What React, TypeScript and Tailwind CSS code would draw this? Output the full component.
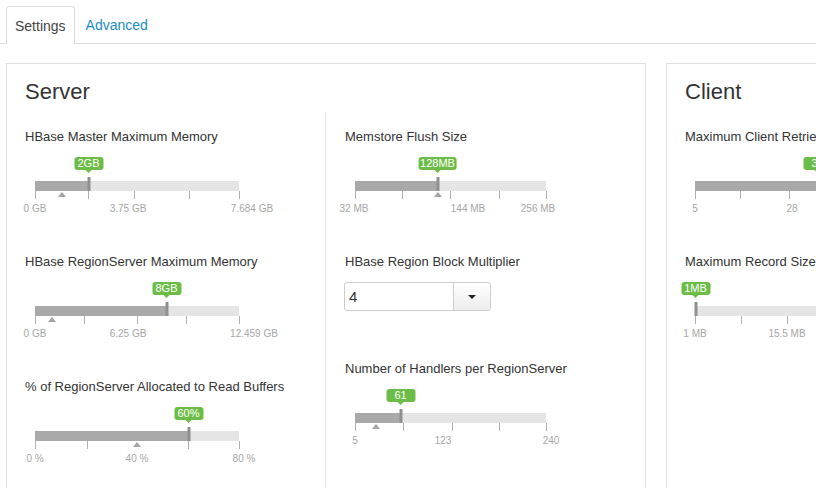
import React from 'react';

type SliderDef = {
  label: string;
  width: number;
  value: number;
  tip: string;
  ticks: number[];
  marker?: number;
  labels: [number, string][];
};

const leftCol: SliderDef[] = [
  {
    label: 'HBase Master Maximum Memory',
    width: 204,
    value: 53,
    tip: '2GB',
    ticks: [0, 53, 99, 154, 204],
    marker: 26,
    labels: [[0, '0 GB'], [93, '3.75 GB'], [217, '7.684 GB']],
  },
  {
    label: 'HBase RegionServer Maximum Memory',
    width: 204,
    value: 131,
    tip: '8GB',
    ticks: [0, 49, 102, 151, 204],
    marker: 16,
    labels: [[0, '0 GB'], [93, '6.25 GB'], [219, '12.459 GB']],
  },
  {
    label: '% of RegionServer Allocated to Read Buffers',
    width: 204,
    value: 153,
    tip: '60%',
    ticks: [0, 52, 153, 204],
    marker: 101,
    labels: [[0, '0 %'], [102, '40 %'], [209, '80 %']],
  },
];

const memstore: SliderDef = {
  label: 'Memstore Flush Size',
  width: 191,
  value: 82,
  tip: '128MB',
  ticks: [0, 47, 95, 144, 191],
  marker: 82,
  labels: [[-1, '32 MB'], [113, '144 MB'], [183, '256 MB']],
};

const handlers: SliderDef = {
  label: 'Number of Handlers per RegionServer',
  width: 191,
  value: 45,
  tip: '61',
  ticks: [0, 48, 97, 144, 191],
  marker: 20,
  labels: [[0, '5'], [88, '123'], [196, '240']],
};

const clientCol: SliderDef[] = [
  {
    label: 'Maximum Client Retries',
    width: 191,
    value: 122,
    tip: '35',
    ticks: [0, 45, 94, 143, 191],
    labels: [[0, '5'], [97, '28'], [191, '50']],
  },
  {
    label: 'Maximum Record Size',
    width: 191,
    value: 0,
    tip: '1MB',
    ticks: [0, 46, 92, 143, 191],
    labels: [[0, '1 MB'], [92, '15.5 MB'], [191, '30 MB']],
  },
];

const Slider = ({ s }: { s: SliderDef }) => (
  <div>
    <div className="h-[18px] text-[13px] leading-[18px] text-[#333] whitespace-nowrap">{s.label}</div>
    <div className="relative mt-[11px] ml-[10px] h-[60px]" style={{ width: s.width }}>
      {/* track */}
      <div className="absolute left-0 right-0 top-[24px] h-[10px] bg-[#e5e5e5]" />
      <div className="absolute left-0 top-[24px] h-[10px] bg-[#a9a9a9]" style={{ width: s.value + 1 }} />
      {/* ticks */}
      {s.ticks.map((t) => (
        <div key={t} className="absolute top-[34px] h-[8px] w-px bg-[#b0b0b0]" style={{ left: t }} />
      ))}
      {/* recommended marker */}
      {s.marker !== undefined && (
        <div
          className="absolute top-[35px] h-0 w-0 -translate-x-1/2 border-x-[4px] border-b-[5px] border-x-transparent border-b-[#a3a3a3]"
          style={{ left: s.marker + 0.5 }}
        />
      )}
      {/* handle */}
      <div className="absolute top-[20px] h-[14px] w-[3px] -translate-x-1/2 bg-[#909090]" style={{ left: s.value + 0.5 }} />
      {/* tooltip */}
      <div className="absolute top-0 -translate-x-1/2 flex flex-col items-center" style={{ left: s.value + 0.5 }}>
        <div className="h-[13px] min-w-[29px] rounded-[3px] bg-[#6cbd47] px-[2px] text-center text-[11px] leading-[13px] text-white whitespace-nowrap">
          {s.tip}
        </div>
        <div className="h-0 w-0 border-x-[3px] border-t-[3px] border-x-transparent border-t-[#6cbd47]" />
      </div>
      {/* tick labels */}
      {s.labels.map(([x, l]) => (
        <div
          key={l}
          className="absolute top-[46px] -translate-x-1/2 text-[10px] leading-[12px] text-[#a6a6a6] whitespace-nowrap"
          style={{ left: x }}
        >
          {l}
        </div>
      ))}
    </div>
  </div>
);

const SelectBox = () => (
  <div>
    <div className="h-[18px] text-[13px] leading-[18px] text-[#333] whitespace-nowrap">HBase Region Block Multiplier</div>
    <div className="mt-[11px] -ml-px flex h-[29px] w-[147px] rounded-[3px] border border-[#cccccc] bg-white">
      <div className="flex-1 pl-[4px] text-[15px] leading-[27px] text-[#333]">4</div>
      <div className="flex w-[37px] items-center justify-center border-l border-[#cccccc] bg-gradient-to-b from-white to-[#ededed] rounded-r-[3px]">
        <div className="h-0 w-0 border-x-[4px] border-t-[4px] border-x-transparent border-t-[#222]" />
      </div>
    </div>
  </div>
);

export default function App() {
  return (
    <div className="h-[488px] w-[816px] overflow-hidden bg-white" style={{ fontFamily: '"Liberation Sans", Arial, sans-serif' }}>
      {/* tabs */}
      <div className="flex items-end border-b border-[#dddddd] pl-[6px] pt-[6px]">
        <div className="-mb-px h-[38px] rounded-t-[3px] border border-b-0 border-[#dddddd] bg-white px-[8px] text-[14px] leading-[38px] text-[#444]">
          Settings
        </div>
        <div className="h-[37px] px-[11px] text-[14px] leading-[38px] text-[#1a8bc5]">Advanced</div>
      </div>

      {/* panels */}
      <div className="flex gap-[20px] pl-[6px] pt-[19px]">
        <div className="h-[500px] w-[640px] shrink-0 border border-[#e0e0e0] pl-[18px] pt-[15px]">
          <div className="h-[33px] text-[22px] leading-[26px] text-[#333]">Server</div>
          <div className="flex">
            <div className="w-[300px] pt-[16px]">
              {leftCol.map((s) => (
                <div key={s.label} className="h-[125px]">
                  <Slider s={s} />
                </div>
              ))}
            </div>
            <div className="h-[400px] border-l border-[#e5e5e5] pl-[19px] pt-[16px]">
              <div className="h-[125px]">
                <Slider s={memstore} />
              </div>
              <div className="h-[107px]">
                <SelectBox />
              </div>
              <Slider s={handlers} />
            </div>
          </div>
        </div>

        <div className="h-[500px] w-[640px] shrink-0 border border-[#e0e0e0] pl-[18px] pt-[15px]">
          <div className="h-[33px] text-[22px] leading-[26px] text-[#333]">Client</div>
          <div className="pt-[16px]">
            {clientCol.map((s) => (
              <div key={s.label} className="h-[125px]">
                <Slider s={s} />
              </div>
            ))}
          </div>
        </div>
      </div>
    </div>
  );
}
